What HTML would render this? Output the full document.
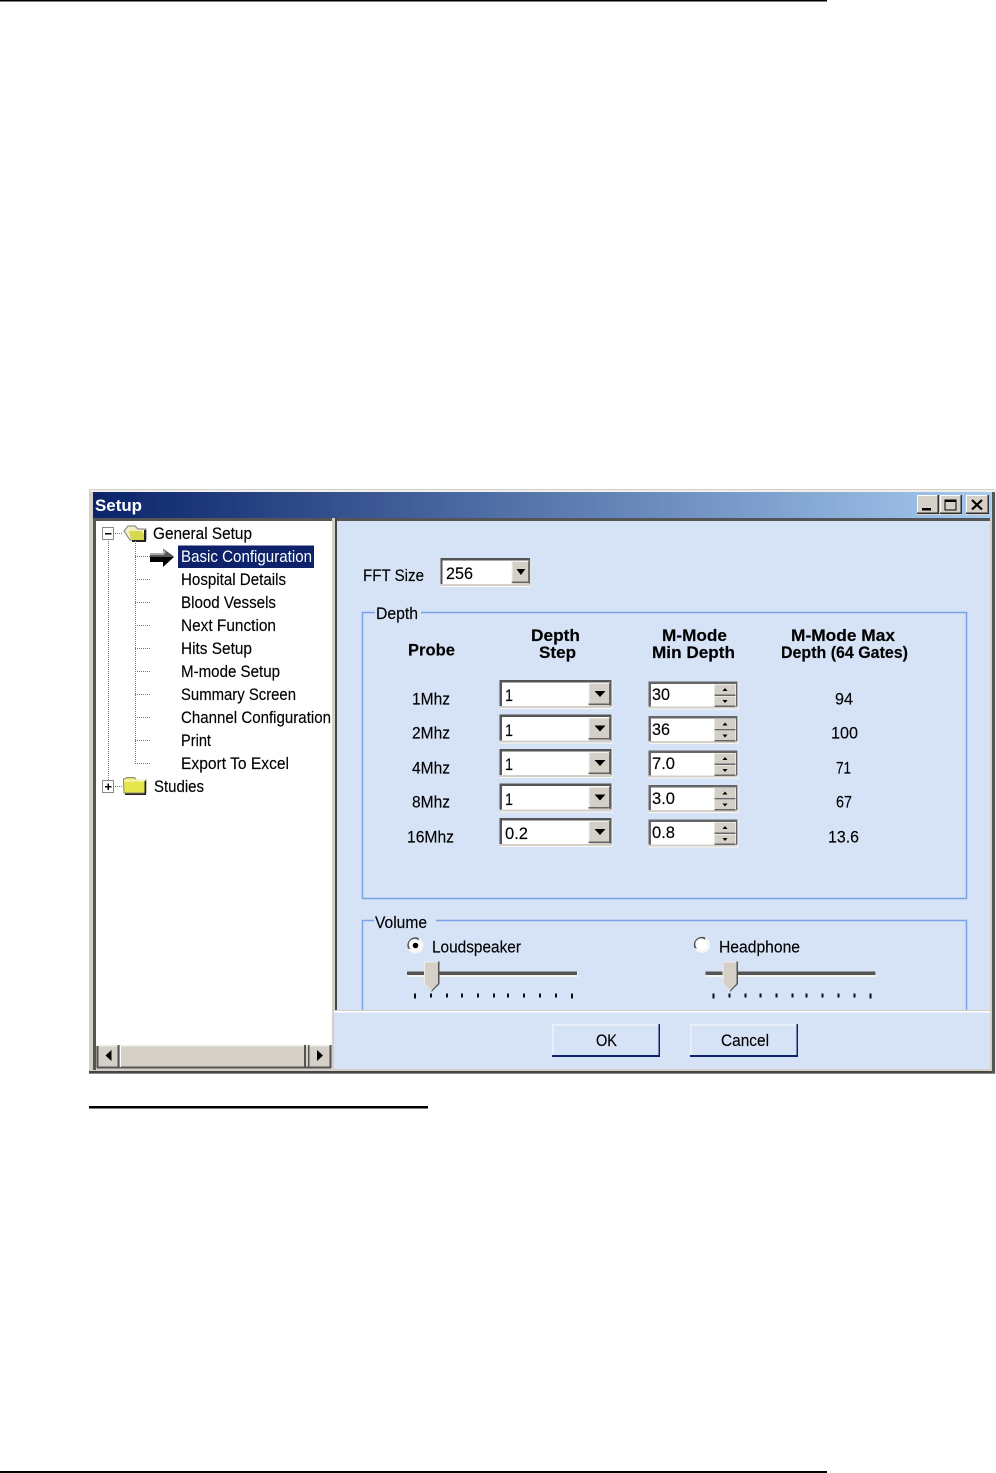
<!DOCTYPE html>
<html><head><meta charset="utf-8"><title>Setup</title>
<style>
html,body{margin:0;padding:0;background:#fff;width:996px;height:1473px;overflow:hidden}
svg{display:block;position:absolute;left:0;top:0}
text{font-family:"Liberation Sans",sans-serif;font-size:17px;fill:#000;stroke:#000;stroke-width:.15px}
.b{font-weight:bold;fill:#000}
</style></head><body>
<svg width="996" height="1473" viewBox="0 0 996 1473" xmlns="http://www.w3.org/2000/svg">
<defs>
<linearGradient id="tg" x1="0" x2="1" y1="0" y2="0"><stop offset="0" stop-color="#0a246a"/><stop offset="1" stop-color="#a6caf0"/></linearGradient>
<filter id="s" x="-2%" y="-2%" width="104%" height="104%"><feGaussianBlur stdDeviation="0.3"/></filter>
<g id="combo">
<rect x="0" y="0" width="113" height="29" fill="#f8f8f4"/>
<rect x="0" y="0" width="112" height="28" fill="#555"/>
<rect x="2.500" y="2.500" width="108" height="23.500" fill="#fff"/>
<rect x="0" y="26" width="112" height="2" fill="#d4d0c8"/>
<rect x="89" y="3" width="22" height="23" fill="#d4d0c8"/>
<path d="M89 3h22v1h-21v22h-1z" fill="#f4f2ee"/>
<path d="M89 25h22v-22h-1.500v20.500h-20.500z" fill="#666"/>
<path d="M95 11h11l-5.500 6z" fill="#000"/>
</g>
<g id="spin">
<rect x="0" y="0" width="90" height="28" fill="#f8f8f4"/>
<rect x="0" y="0" width="89" height="27" fill="#666"/>
<rect x="2.500" y="2.500" width="85" height="22.500" fill="#fff"/>
<rect x="0" y="25" width="89" height="2" fill="#d4d0c8"/>
<rect x="66" y="3" width="21" height="11" fill="#d4d0c8"/>
<rect x="66" y="15" width="21" height="10" fill="#d4d0c8"/>
<path d="M66 13h21v1.500h-21zM66 24h21v1.500h-21z" fill="#666"/>
<path d="M74 9.500h5l-2.500 -3zM74 18.500h5l-2.500 3z" fill="#000"/>
</g>
<g id="slider">
<rect x="0" y="-1" width="171" height="5.500" fill="#f3f3ee"/>
<rect x="0" y="-1" width="170" height="3.500" fill="#555"/>
<path d="M17 -11h15v22l-7.500 8l-7.500 -8z" fill="#d4d0c8"/>
<path d="M17 -11h14v1h-13v21l7 7v1l-8 -8z" fill="#f0eee8"/>
<path d="M31 -11h1.500v22.500l-8 8v-1.500l6.500 -7z" fill="#555"/>
<path d="M7 21h2v5h-2zM23 21h2v4h-2zM39 21h2v4h-2zM54 21h2v4h-2zM70 21h2v4h-2zM86 21h2v4h-2zM100 21h2v4h-2zM116 21h2v4h-2zM132 21h2v4h-2zM148 21h2v4h-2zM164 21h2v5h-2z" fill="#111"/>
</g>
<g id="radio">
<circle cx="0" cy="0" r="8" fill="#f6f6f4"/>
<path d="M-7.500 3A8 8 0 0 1 3 -7.500L3.500 -5A5.500 5.500 0 0 0 -5 3.500Z" fill="#444"/>
<circle cx="0" cy="0" r="5" fill="#fff"/>
</g>
</defs>

<rect x="0" y="0" width="827" height="1.500" fill="#000"/>
<rect x="0" y="1471" width="827" height="2" fill="#000"/>
<rect x="89" y="1106" width="339" height="2.500" fill="#000"/>

<g filter="url(#s)">
<!-- window frame -->
<rect x="89" y="489" width="907" height="585" fill="#d4d0c8"/>
<rect x="89" y="1071" width="906" height="2.500" fill="#444"/>
<rect x="90" y="490" width="906" height="2" fill="#f0eeea"/>
<rect x="93" y="492" width="898" height="26" fill="url(#tg)"/>
<rect x="93" y="518" width="897" height="3" fill="#555"/>
<rect x="992" y="492" width="3" height="581" fill="#555"/>
<rect x="995" y="489" width="1" height="585" fill="#e8e8e8"/>

<!-- panels -->
<rect x="93" y="518" width="3" height="552" fill="#555"/>
<rect x="96" y="521" width="236" height="548" fill="#fff"/>
<rect x="332" y="518" width="3" height="552" fill="#d4d0c8"/>
<rect x="335" y="518" width="2" height="493" fill="#444"/>
<rect x="337" y="521" width="653" height="548" fill="#d6e3f7"/>
<rect x="334" y="1012" width="656" height="57" fill="#d6e3f7"/>
<rect x="334" y="1010" width="656" height="1" fill="#d4d0c8"/>
<rect x="334" y="1011" width="656" height="1.500" fill="#fff"/>
<rect x="96" y="1068" width="236" height="3" fill="#d4d0c8"/>

<!-- title -->
<text x="95" y="511" class="b" style="fill:#fff;stroke:none;font-size:17px" textLength="47" lengthAdjust="spacingAndGlyphs">Setup</text>
<g>
<rect x="917" y="495" width="22" height="20" fill="#d4d0c8"/><path d="M917 495h22v1h-21v19h-1z" fill="#fff"/><path d="M917 514h22v-19h-1.500v17.500h-20.500z" fill="#333"/>
<rect x="922" y="508" width="9" height="2.500" fill="#000"/>
<rect x="940" y="495" width="22" height="20" fill="#d4d0c8"/><path d="M940 495h22v1h-21v19h-1z" fill="#fff"/><path d="M940 514h22v-19h-1.500v17.500h-20.500z" fill="#333"/>
<path d="M944.500 499.500h12v11h-12z M945.500 502v7.500h10v-7.500z" fill="#000" fill-rule="evenodd"/>
<rect x="966" y="495" width="23" height="20" fill="#d4d0c8"/><path d="M966 495h23v1h-22v19h-1z" fill="#fff"/><path d="M966 514h23v-19h-1.500v17.500h-21.500z" fill="#333"/>
<path d="M972 500l10 9.500M982 500l-10 9.500" stroke="#000" stroke-width="2.200" fill="none"/>
</g>

<rect x="102.500" y="527.500" width="11" height="12" fill="#fff" stroke="#888"/>
<rect x="105" y="533" width="6.500" height="1.500" fill="#000"/>
<rect x="102.500" y="780.500" width="11" height="12" fill="#fff" stroke="#888"/>
<rect x="105" y="786" width="6.500" height="1.500" fill="#000"/><rect x="107.500" y="783.500" width="1.500" height="6.500" fill="#000"/>

<!-- folders -->
<path d="M124 531l4 -5h7l3 3h8v11h-16z" fill="#f3f1c4" stroke="#777" stroke-width="1"/>
<path d="M129 531h12l4 4l-2 5h-12z" fill="#d8d850"/>
<path d="M146 530v12h-14v-2h12v-10z" fill="#222"/>
<path d="M123.500 782v-3l4 -1.500h7l2 2.500h9.500v13h-22z" fill="#e6e64e" stroke="#8a8a6a" stroke-width="1"/>
<path d="M124 779.500h21v2h-21z" fill="#f6f4c8"/>
<path d="M146 781v14h-21v-1.500h19.500v-12.500z" fill="#222"/>

<!-- arrow -->
<path d="M150 553h13v-4.500l11 8l-11 8v-4.500h-13z" fill="#555"/>
<path d="M150 557h24l-11 10v-5h-13z" fill="#000"/>
<path d="M150 553h13v-4l3 3l-2 3h-14z" fill="#aaa"/>

<!-- tree text -->
<text x="153" y="539" textLength="99" lengthAdjust="spacingAndGlyphs">General Setup</text>
<rect x="178" y="545.500" width="136" height="22.500" fill="#0a246a"/>
<text x="181" y="562" textLength="131" lengthAdjust="spacingAndGlyphs" style="fill:#fff;stroke:none">Basic Configuration</text>
<text x="181" y="585" textLength="105" lengthAdjust="spacingAndGlyphs">Hospital Details</text>
<text x="181" y="608" textLength="95" lengthAdjust="spacingAndGlyphs">Blood Vessels</text>
<text x="181" y="631" textLength="95" lengthAdjust="spacingAndGlyphs">Next Function</text>
<text x="181" y="654" textLength="71" lengthAdjust="spacingAndGlyphs">Hits Setup</text>
<text x="181" y="677" textLength="99" lengthAdjust="spacingAndGlyphs">M-mode Setup</text>
<text x="181" y="700" textLength="115" lengthAdjust="spacingAndGlyphs">Summary Screen</text>
<text x="181" y="723" textLength="150" lengthAdjust="spacingAndGlyphs">Channel Configuration</text>
<text x="181" y="746" textLength="30" lengthAdjust="spacingAndGlyphs">Print</text>
<text x="181" y="769" textLength="108" lengthAdjust="spacingAndGlyphs">Export To Excel</text>
<text x="154" y="792" textLength="50" lengthAdjust="spacingAndGlyphs">Studies</text>

<!-- scrollbar -->
<rect x="96" y="1045" width="236" height="23" fill="#d4d0c8"/>
<rect x="96" y="1045" width="236" height="1.500" fill="#f0eeea"/>
<rect x="97" y="1066.500" width="234" height="2" fill="#555"/>
<path d="M96.500 1046h2v22h-2zM117.500 1045h2v23h-2zM304 1045h2v23h-2zM308 1045h1.500v23h-1.500zM329.500 1045h2v23h-2z" fill="#555"/>
<rect x="120" y="1046" width="1" height="21" fill="#fff"/>
<path d="M111.500 1050v11l-6 -5.500z" fill="#000"/>
<path d="M317 1050v11l6 -5.500z" fill="#000"/>

<!-- FFT -->
<text x="363" y="581" textLength="61" lengthAdjust="spacingAndGlyphs">FFT Size</text>
<g transform="translate(440.500,558) scale(0.8,1)"><use href="#combo"/></g>
<text x="446" y="579" textLength="27" lengthAdjust="spacingAndGlyphs">256</text>

<!-- groups -->
<path d="M375 612.500H362.500V898.500H966.500V612.500H421" fill="none" stroke="#7aa2e6" stroke-width="1.500"/>
<path d="M374 920.500H362.500V1010M966.500 1010V920.500H436" fill="none" stroke="#7aa2e6" stroke-width="1.500"/>
<text x="376" y="619" textLength="42" lengthAdjust="spacingAndGlyphs">Depth</text>
<text x="375" y="928" textLength="52" lengthAdjust="spacingAndGlyphs">Volume</text>

<!-- headers -->
<text x="408" y="655.500" class="b" textLength="47" lengthAdjust="spacingAndGlyphs">Probe</text>
<text x="531" y="641" class="b" textLength="49" lengthAdjust="spacingAndGlyphs">Depth</text>
<text x="539" y="658" class="b" textLength="37" lengthAdjust="spacingAndGlyphs">Step</text>
<text x="662" y="641" class="b" textLength="65" lengthAdjust="spacingAndGlyphs">M-Mode</text>
<text x="652" y="658" class="b" textLength="83" lengthAdjust="spacingAndGlyphs">Min Depth</text>
<text x="791" y="641" class="b" textLength="104" lengthAdjust="spacingAndGlyphs">M-Mode Max</text>
<text x="781" y="658" class="b" textLength="127" lengthAdjust="spacingAndGlyphs">Depth (64 Gates)</text>

<!-- rows -->
<text x="412" y="704.500" textLength="38" lengthAdjust="spacingAndGlyphs">1Mhz</text>
<text x="412" y="738.500" textLength="38" lengthAdjust="spacingAndGlyphs">2Mhz</text>
<text x="412" y="773.500" textLength="38" lengthAdjust="spacingAndGlyphs">4Mhz</text>
<text x="412" y="807.500" textLength="38" lengthAdjust="spacingAndGlyphs">8Mhz</text>
<text x="407" y="842.500" textLength="47" lengthAdjust="spacingAndGlyphs">16Mhz</text>

<use href="#combo" x="499.500" y="680"/>
<use href="#combo" x="499.500" y="714.500"/>
<use href="#combo" x="499.500" y="749"/>
<use href="#combo" x="499.500" y="783.500"/>
<use href="#combo" x="499.500" y="818"/>
<text x="505" y="701" textLength="8" lengthAdjust="spacingAndGlyphs">1</text>
<text x="505" y="736" textLength="8" lengthAdjust="spacingAndGlyphs">1</text>
<text x="505" y="770" textLength="8" lengthAdjust="spacingAndGlyphs">1</text>
<text x="505" y="805" textLength="8" lengthAdjust="spacingAndGlyphs">1</text>
<text x="505" y="839" textLength="23" lengthAdjust="spacingAndGlyphs">0.2</text>

<use href="#spin" x="648.500" y="681.500"/>
<use href="#spin" x="648.500" y="716"/>
<use href="#spin" x="648.500" y="750.500"/>
<use href="#spin" x="648.500" y="785"/>
<use href="#spin" x="648.500" y="819.500"/>
<text x="652" y="700" textLength="18" lengthAdjust="spacingAndGlyphs">30</text>
<text x="652" y="735" textLength="18" lengthAdjust="spacingAndGlyphs">36</text>
<text x="652" y="769" textLength="23" lengthAdjust="spacingAndGlyphs">7.0</text>
<text x="652" y="804" textLength="23" lengthAdjust="spacingAndGlyphs">3.0</text>
<text x="652" y="838" textLength="23" lengthAdjust="spacingAndGlyphs">0.8</text>

<text x="835" y="704.500" textLength="18" lengthAdjust="spacingAndGlyphs">94</text>
<text x="831" y="738.500" textLength="27" lengthAdjust="spacingAndGlyphs">100</text>
<text x="836" y="773.500" textLength="15" lengthAdjust="spacingAndGlyphs">71</text>
<text x="836" y="807.500" textLength="16" lengthAdjust="spacingAndGlyphs">67</text>
<text x="828" y="842.500" textLength="31" lengthAdjust="spacingAndGlyphs">13.6</text>

<!-- volume -->
<use href="#radio" x="415.500" y="945.500"/><circle cx="415.500" cy="945.500" r="2.800" fill="#000"/>
<use href="#radio" x="702" y="945"/>
<text x="432" y="952.500" textLength="89" lengthAdjust="spacingAndGlyphs">Loudspeaker</text>
<text x="719" y="952.500" textLength="81" lengthAdjust="spacingAndGlyphs">Headphone</text>
<use href="#slider" x="407" y="972.500"/>
<use href="#slider" x="705.500" y="972.500"/>
<rect x="338" y="1010" width="652" height="1" fill="#d4d0c8"/>

<!-- buttons -->
<path d="M552 1024h108v33h-108z" fill="#d6e3f7"/>
<path d="M552 1024h107v1.500h-105.500v30h-1.500z" fill="#ecf1fb"/>
<path d="M552 1055h106.500v-31h1.500v33h-108z" fill="#0a246a"/>
<text x="596" y="1046" textLength="21" lengthAdjust="spacingAndGlyphs">OK</text>
<path d="M690 1024h108v33h-108z" fill="#d6e3f7"/>
<path d="M690 1024h107v1.500h-105.500v30h-1.500z" fill="#ecf1fb"/>
<path d="M690 1055h106.500v-31h1.500v33h-108z" fill="#0a246a"/>
<text x="721" y="1046" textLength="48" lengthAdjust="spacingAndGlyphs">Cancel</text>
</g>

<!-- tree lines, crisp so the dots survive -->
<g stroke="#777" stroke-width="1" stroke-dasharray="1 1" fill="none">
<path d="M108.500 541V780M135.500 541V763.500"/>
<path d="M115 533.500H123M115 786.500H123"/>
<path d="M135 556.500H150M135 579.500H151M135 602.500H151M135 625.500H151M135 648.500H151M135 671.500H151M135 694.500H151M135 717.500H151M135 740.500H151M135 763.500H151"/>
</g>
</svg>
</body></html>
